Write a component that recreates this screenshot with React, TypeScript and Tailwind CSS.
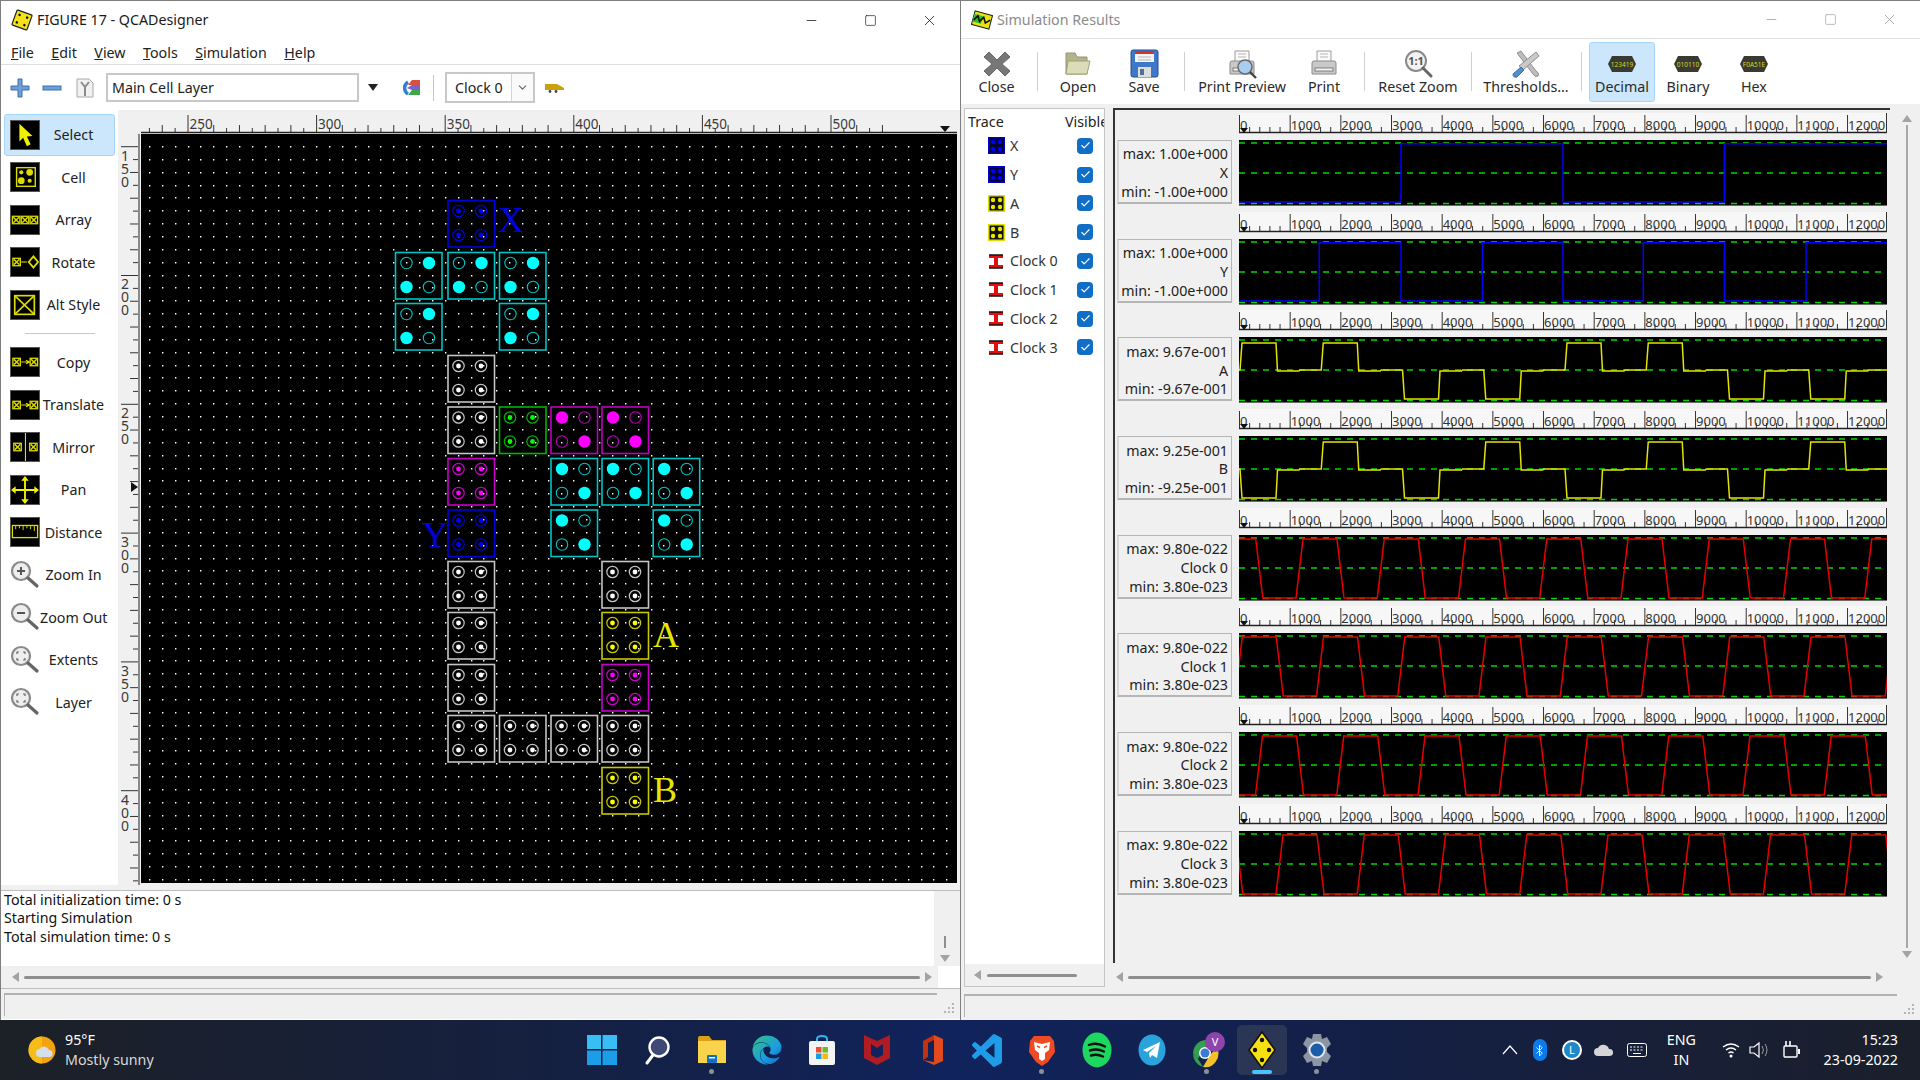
import React from "react";
import { Bluetooth, Check, ChevronDown, Minus, Square, X as XIcon } from "lucide-react";
import { FaEdge } from "react-icons/fa";

// ---------- palette / circuit icons ----------
const Y = "#dcdc00";

const MiniCell = ({ x, y, s = 8 }: { x: number; y: number; s?: number }) => (
  <g>
    <rect x={x} y={y} width={s} height={s} fill="none" stroke={Y} strokeWidth="1.4" />
    <path d={`M${x + 1} ${y + 1}L${x + s - 1} ${y + s - 1}M${x + s - 1} ${y + 1}L${x + 1} ${y + s - 1}`} stroke={Y} strokeWidth="1.6" />
  </g>
);

const BlackIcon = ({ children }: { children: React.ReactNode }) => (
  <svg width="30" height="30" viewBox="0 0 30 30" className="shrink-0 border border-[#555]">
    <rect width="30" height="30" fill="#000" />
    {children}
  </svg>
);

const Lens = ({ children }: { children?: React.ReactNode }) => (
  <svg width="30" height="30" viewBox="0 0 30 30" className="shrink-0">
    <circle cx="11" cy="11" r="9" fill="#eee" stroke="#8a8a8a" strokeWidth="2.2" />
    <path d="M18 18L27 26" stroke="#666" strokeWidth="3.2" strokeLinecap="round" />
    {children}
  </svg>
);

const corners = <path d="M7 9V7H9M13 7H15V9M15 13V15H13M9 15H7V13" fill="none" stroke="#666" strokeWidth="1.2" />;

const paletteTop: [string, React.ReactNode][] = [
  ["Select", <BlackIcon><path d="M9 3V22L13 18L17 27L21 25L17 16.5L23 16Z" fill="#f2f200" /></BlackIcon>],
  ["Cell", <BlackIcon>
    <rect x="6" y="5" width="20" height="20" fill="none" stroke={Y} strokeWidth="1.5" />
    <circle cx="11" cy="10" r="2.2" fill={Y} /><circle cx="20" cy="10" r="3.6" fill={Y} />
    <circle cx="11" cy="19" r="3.6" fill={Y} /><circle cx="20" cy="19" r="2.2" fill={Y} />
  </BlackIcon>],
  ["Array", <BlackIcon><MiniCell x={1.5} y={11} /><MiniCell x={11} y={11} /><MiniCell x={20.5} y={11} /></BlackIcon>],
  ["Rotate", <BlackIcon>
    <MiniCell x={2} y={11} />
    <path d="M11 15H17" stroke={Y} strokeWidth="1.2" />
    <path d="M24 9L29 15L24 21L19 15Z" fill="none" stroke={Y} strokeWidth="2" />
  </BlackIcon>],
  ["Alt Style", <BlackIcon>
    <rect x="4" y="5" width="21" height="20" fill="none" stroke={Y} strokeWidth="1.8" />
    <path d="M4 5L25 25M25 5L4 25" stroke={Y} strokeWidth="1.8" />
  </BlackIcon>],
];

const arrowCells = (
  <BlackIcon>
    <MiniCell x={2} y={11} />
    <path d="M11 15H19M16 13L20 15L16 17" fill="none" stroke={Y} strokeWidth="1.2" />
    <MiniCell x={20.5} y={11} />
  </BlackIcon>
);

const paletteBottom: [string, React.ReactNode][] = [
  ["Copy", arrowCells],
  ["Translate", arrowCells],
  ["Mirror", <BlackIcon><MiniCell x={3} y={11} /><path d="M15.5 0V30" stroke={Y} strokeWidth="1.2" /><MiniCell x={20} y={11} /></BlackIcon>],
  ["Pan", <BlackIcon>
    <path d="M15 3V27M2 15H28" stroke="#f2f200" strokeWidth="2" />
    <path d="M15 0L19 5H11ZM15 30L19 25H11ZM0 15L5 11V19ZM30 15L25 11V19Z" fill="#f2f200" />
  </BlackIcon>],
  ["Distance", <BlackIcon>
    <rect x="1.5" y="8" width="27" height="13" fill="none" stroke={Y} strokeWidth="1.4" />
    <path d="M5 8V12M9 8V11M13 8V13M17 8V11M21 8V12M25 8V14" stroke={Y} strokeWidth="1" />
  </BlackIcon>],
  ["Zoom In", <Lens><path d="M7 11H15M11 7V15" stroke="#555" strokeWidth="2" /></Lens>],
  ["Zoom Out", <Lens><path d="M7 11H15" stroke="#555" strokeWidth="2" /></Lens>],
  ["Extents", <Lens>{corners}</Lens>],
  ["Layer", <Lens>{corners}</Lens>],
];

const PaletteButton = ({ label, icon, active }: { label: string; icon: React.ReactNode; active?: boolean }) => (
  <div className={`mx-[3px] flex h-[42.5px] w-[111px] items-center rounded-[3px] border pl-[5px] ${active ? "border-[#a6d5fb] bg-[#cce6fb]" : "border-transparent"}`}>
    {icon}
    <span className="flex-1 pr-[7px] text-center text-[14.25px] whitespace-nowrap text-[#222]">{label}</span>
  </div>
);

// ---------- QCA canvas ----------
const colX = [395, 447.5, 499, 550.5, 601.5, 652.7];
const rowY = [200, 252, 303, 355, 406.5, 458, 509.5, 561, 612, 664, 715, 767];

type CellKind = "white" | "blue" | "green" | "yellow" | "mag" | "cyanA" | "cyanB" | "magFixed";

const cellColors: Record<CellKind, [string, string]> = {
  white: ["#c4c4c4", "#ffffff"],
  blue: ["#0000d8", "#0000ff"],
  green: ["#00b400", "#00ff00"],
  yellow: ["#c8c800", "#ffff00"],
  magFixed: ["#c800c8", "#ff00ff"],
  mag: ["#c000c0", "#ff00ff"],
  cyanA: ["#00c4c4", "#00ffff"],
  cyanB: ["#00c4c4", "#00ffff"],
};

const cells: [number, number, CellKind][] = [
  [1, 0, "blue"],
  [0, 1, "cyanA"], [1, 1, "cyanA"], [2, 1, "cyanA"],
  [0, 2, "cyanA"], [2, 2, "cyanA"],
  [1, 3, "white"],
  [1, 4, "white"], [2, 4, "green"], [3, 4, "mag"], [4, 4, "mag"],
  [1, 5, "magFixed"], [3, 5, "cyanB"], [4, 5, "cyanB"], [5, 5, "cyanB"],
  [1, 6, "blue"], [3, 6, "cyanB"], [5, 6, "cyanB"],
  [1, 7, "white"], [4, 7, "white"],
  [1, 8, "white"], [4, 8, "yellow"],
  [1, 9, "white"], [4, 9, "magFixed"],
  [1, 10, "white"], [2, 10, "white"], [3, 10, "white"], [4, 10, "white"],
  [4, 11, "yellow"],
];

const QcaCell = ({ x, y, kind }: { x: number; y: number; kind: CellKind }) => {
  const [line, fill] = cellColors[kind];
  const spots = [[11, 11, 0], [33.5, 11, 1], [11, 35, 2], [33.5, 35, 3]] as const;
  // which spots carry charge for the polarised cells
  const charged = (i: number) => (kind === "cyanA" ? i === 1 || i === 2 : i === 0 || i === 3);
  const polar = kind === "cyanA" || kind === "cyanB" || kind === "mag";
  return (
    <g>
      <rect x={x + 0.5} y={y + 0.5} width="46.5" height="46.5" fill="none" stroke={line} strokeWidth="1.6" />
      {spots.map(([dx, dy, i]) =>
        polar ? (
          charged(i) ? (
            <circle key={i} cx={x + dx + 0.5} cy={y + dy} r="6.2" fill={fill} />
          ) : (
            <circle key={i} cx={x + dx + 0.5} cy={y + dy} r="5.7" fill="none" stroke={line} strokeWidth="1.1" />
          )
        ) : (
          <g key={i}>
            <circle cx={x + dx} cy={y + dy} r="5.7" fill="none" stroke={line} strokeWidth="1.2" />
            <circle cx={x + dx} cy={y + dy} r="2.4" fill={fill} />
          </g>
        )
      )}
    </g>
  );
};

const gridDots = (() => {
  let d = "";
  for (let i = 0; i < 64; i++) {
    for (let j = 0; j < 58; j++) {
      d += `M${Math.round(149 + i * 12.86)} ${Math.round(146 + j * 12.86)}h1.4v1.4h-1.4z`;
    }
  }
  return d;
})();

const Canvas = () => (
  <svg width="816" height="749" viewBox="141 134 816 749" className="block bg-black">
    <path d={gridDots} fill="#ffffff" />
    {cells.map(([c, r, k], i) => (
      <QcaCell key={i} x={colX[c]} y={rowY[r]} kind={k} />
    ))}
    <g fontFamily="'Liberation Serif', serif" fontSize="36">
      <text x="498" y="232" fill="#0000e0">X</text>
      <text x="422" y="546.5" fill="#0000e0">Y</text>
      <text x="653" y="647" fill="#e6e600">A</text>
      <text x="653" y="801.5" fill="#e6e600">B</text>
    </g>
  </svg>
);

const TopRuler = () => {
  const ticks = [];
  for (let i = 0; i < 65; i++) {
    const x = 59.4 + i * 12.86;
    if (x < 142 || x > 958) continue;
    if (i % 10 === 0) ticks.push(<path key={i} d={`M${x} 115V133`} stroke="#333" strokeWidth="1" />);
    else ticks.push(<path key={i} d={`M${x} ${i % 2 ? 128 : 125}V133`} stroke="#333" strokeWidth="1" />);
  }
  return (
    <svg width="819" height="24" viewBox="141 110 819 24" className="block">
      {ticks}
      <path d="M141 132.5H957" stroke="#222" strokeWidth="1.4" />
      {[250, 300, 350, 400, 450, 500].map((n, i) => (
        <text key={n} x={189.5 + i * 128.6} y="129" fontSize="13.5" fill="#3a3a3a">{n}</text>
      ))}
      <path d="M940 126H950L945 132Z" fill="#111" />
    </svg>
  );
};

const LeftRuler = () => {
  const ticks = [];
  for (let i = 0; i < 58; i++) {
    const y = 146.7 + i * 12.88;
    const x1 = i % 10 === 0 ? 121 : i % 2 ? 133 : 130;
    ticks.push(<path key={i} d={`M${x1} ${y}H138`} stroke="#333" strokeWidth="1" />);
  }
  return (
    <svg width="23" height="751" viewBox="118 134 23 751" className="block">
      {ticks}
      <path d="M139 134V885" stroke="#444" strokeWidth="1.2" />
      {["150", "200", "250", "300", "350", "400"].map((n, i) => (
        <g key={n} fontSize="14" fill="#3a3a3a">
          {n.split("").map((ch, j) => (
            <text key={j} x="121" y={160.5 + i * 128.8 + j * 13}>{ch}</text>
          ))}
        </g>
      ))}
      <path d="M131 482L138 487L131 492Z" fill="#111" />
    </svg>
  );
};

// ---------- small chrome bits ----------
const Arrow = ({ dir, color = "#a3a3a3" }: { dir: "up" | "down" | "left" | "right"; color?: string }) => {
  const pts = { up: "0,9 5,2 10,9", down: "0,1 10,1 5,8", left: "9,0 9,10 2,5", right: "1,0 1,10 8,5" }[dir];
  return (
    <svg width="10" height="10" viewBox="0 0 10 10" className="shrink-0">
      <polygon points={pts} fill={color} />
    </svg>
  );
};

const HScroll = ({ className }: { className: string }) => (
  <div className={`flex items-center gap-[4px] ${className}`}>
    <Arrow dir="left" />
    <div className="h-[3px] flex-1 rounded-full bg-[#8e8e8e]" />
    <Arrow dir="right" />
  </div>
);

const Grip = () => (
  <svg width="14" height="14" viewBox="0 0 14 14" className="shrink-0">
    <path d="M10 2h2v2h-2zM6 6h2v2H6zM10 6h2v2h-2zM2 10h2v2H2zM6 10h2v2H6zM10 10h2v2h-2z" fill="#b5b5b5" />
  </svg>
);

const StatusBar = ({ className }: { className: string }) => (
  <div className={`flex h-[28px] items-center pb-[2px] ${className}`}>
    <div className="h-[23px] flex-1 border-t-2 border-l border-[#b2b2b2] bg-[#f0f0f0]" />
    <div className="flex w-[23px] justify-center pt-[8px]"><Grip /></div>
  </div>
);

const WindowControls = ({ color }: { color: string }) => (
  <div className="flex items-center pr-[1px]" style={{ color }}>
    <div className="flex w-[59px] justify-center"><Minus size={15} strokeWidth={1.2} /></div>
    <div className="flex w-[59px] justify-center"><Square size={13} strokeWidth={1.2} /></div>
    <div className="flex w-[59px] justify-center"><XIcon size={17} strokeWidth={1.1} /></div>
  </div>
);

// ---------- left window ----------
const menus: [string, string][] = [["F", "ile"], ["E", "dit"], ["V", "iew"], ["T", "ools"], ["S", "imulation"], ["H", "elp"]];

const QcaLogo = ({ size = 22 }: { size?: number }) => (
  <svg width={size} height={size} viewBox="0 0 22 22" className="shrink-0">
    <g transform="rotate(20 11 11)">
      <rect x="3" y="3" width="16" height="16" rx="1" fill="#f3e21a" stroke="#222" strokeWidth="1.2" />
      <circle cx="7" cy="7" r="1.3" fill="#111" /><circle cx="15" cy="7" r="1.3" fill="#111" />
      <circle cx="7" cy="15" r="1.3" fill="#111" /><circle cx="15" cy="15" r="1.3" fill="#111" />
    </g>
  </svg>
);

const DesignerWindow = () => (
  <section className="flex h-full w-[960px] shrink-0 flex-col border-t border-l border-[#7f7f7f] bg-white">
    <header className="flex h-[38px] shrink-0 items-center justify-between pl-[10px]">
      <div className="flex items-center gap-[4px]">
        <QcaLogo />
        <span className="text-[14.25px] text-[#1a1a1a]">FIGURE 17 - QCADesigner</span>
      </div>
      <WindowControls color="#111" />
    </header>

    <nav className="flex h-[26px] shrink-0 items-center gap-[17.5px] border-b border-[#dedede] pt-[2px] pl-[10px] text-[14.25px] text-[#222]">
      {menus.map(([k, rest]) => (
        <span key={k}><u>{k}</u>{rest}</span>
      ))}
    </nav>

    <div className="flex h-[45px] shrink-0 items-center pl-[9px]">
      <svg width="20" height="20" viewBox="0 0 20 20" className="shrink-0">
        <path d="M8 1h4v7h7v4h-7v7H8v-7H1V8h7z" fill="#6d9fd6" stroke="#3a70b0" strokeWidth="1" />
      </svg>
      <svg width="20" height="20" viewBox="0 0 20 20" className="ml-[12px] shrink-0">
        <rect x="1" y="8" width="18" height="4" fill="#6d9fd6" stroke="#3a70b0" strokeWidth="1" />
      </svg>
      <svg width="20" height="22" viewBox="0 0 20 22" className="ml-[13px] shrink-0">
        <path d="M2 2H14L18 6V20H2Z" fill="#f1f1f1" stroke="#a8a8a8" />
        <path d="M6 5L10 10L14 5M10 10V19" fill="none" stroke="#8a8a8a" strokeWidth="2" />
      </svg>
      <div className="ml-[11px] flex h-[29px] w-[253px] shrink-0 items-center border-2 border-[#c8c8c8] pl-[4px] text-[14.25px] text-[#222]">Main Cell Layer</div>
      <div className="ml-[9px] shrink-0"><Arrow dir="down" color="#222" /></div>
      <svg width="22" height="20" viewBox="0 0 22 20" className="ml-[21px] shrink-0">
        <path d="M9 4A7 7 0 0 0 9 16" fill="none" stroke="#2f7fd6" strokeWidth="3.4" />
        <path d="M9 7L13 2H21V7Z" fill="#d8503f" />
        <path d="M8 10L13 7H21V12H13Z" fill="#7a62c8" />
        <path d="M13 12H21V17H9Z" fill="#3ea64a" />
      </svg>
      <div className="ml-[12px] h-[26px] w-px shrink-0 bg-[#c4c4c4]" />
      <div className="ml-[11px] flex h-[31px] w-[90px] shrink-0 items-center justify-between border-2 border-[#c8c8c8] pl-[8px] text-[14.25px] text-[#222]">
        <span>Clock 0</span>
        <div className="flex h-full w-[22px] items-center justify-center border-l border-[#d4d4d4] bg-[#fafafa]">
          <ChevronDown size={13} className="text-[#666]" />
        </div>
      </div>
      <svg width="21" height="12" viewBox="0 0 21 12" className="ml-[9px] shrink-0">
        <path d="M1 2H13L20 6V8H1Z" fill="#c9a20a" />
        <circle cx="6" cy="9.5" r="1.4" fill="#444" /><circle cx="12" cy="9.5" r="1.4" fill="#444" />
      </svg>
    </div>

    <div className="flex h-[775px] shrink-0">
      <aside className="flex w-[117px] shrink-0 flex-col bg-white pt-[3.5px]">
        {paletteTop.map(([label, icon], i) => (
          <PaletteButton key={label} label={label} icon={icon} active={i === 0} />
        ))}
        <div className="my-[7px] ml-[24px] h-px w-[70px] bg-[#c8c8c8]" />
        {paletteBottom.map(([label, icon]) => (
          <PaletteButton key={label} label={label} icon={icon} />
        ))}
      </aside>
      <div className="grid flex-1 grid-cols-[23px_1fr] grid-rows-[24px_1fr] bg-[#f0f0f0]">
        <div />
        <TopRuler />
        <LeftRuler />
        <div className="overflow-hidden"><Canvas /></div>
      </div>
    </div>

    <div className="h-[6px] shrink-0 border-b border-[#bdbdbd] bg-[#f0f0f0]" />
    <div className="flex h-[75px] shrink-0">
      <div className="flex-1 pl-[3px] text-[14.25px] leading-[18.4px] text-[#111]">
        <p>Total initialization time: 0 s</p>
        <p>Starting Simulation</p>
        <p>Total simulation time: 0 s</p>
      </div>
      <div className="flex w-[26px] flex-col items-center justify-end bg-[#f0f0f0] pr-[4px] pb-[2px]">
        <div className="mb-[6px] h-[12px] w-[2px] bg-[#8e8e8e]" />
        <Arrow dir="down" />
      </div>
    </div>
    <div className="flex h-[22px] shrink-0 pr-[22px]">
      <HScroll className="flex-1 bg-[#f0f0f0] pr-[4px] pl-[9px]" />
    </div>
    <div className="h-[3px] shrink-0 border-t border-[#bdbdbd] bg-[#f0f0f0]" />
    <StatusBar className="bg-[#f0f0f0] pl-[3px]" />
  </section>
);

// ---------- wave plots ----------
const PLOT_W = 648;

const square = (edges: number[], top: number, bottom: number) => {
  let level = bottom;
  let pts = `0,${level}`;
  edges.forEach((x) => {
    const next = level === bottom ? top : bottom;
    pts += ` ${x},${level} ${x},${next}`;
    level = next;
  });
  return `${pts} ${PLOT_W},${level}`;
};

// first 40% of a clock phase at the level, the rest at the middle
const stepped = (levels: number[]) => {
  const mid = 33;
  let pts = "0,33";
  levels.forEach((lv, k) => {
    const x = k * 81.25;
    const y = lv > 0 ? 6 : 62;
    pts += ` ${x + 1},${mid} ${x + 3},${y} ${x + 37},${y} ${x + 38.5},${mid + 1} ${x + 60},${mid + 1} ${x + 61},${mid} ${x + 81},${mid}`;
  });
  return pts;
};

const clock = (riseStart: number) => {
  let pts = "";
  for (let k = -2; k < 10; k++) {
    const t = riseStart + k * 81.25;
    pts += ` ${t},63 ${t + 7},4 ${t + 41},4 ${t + 48},63`;
  }
  return pts.trim();
};

const traces = [
  { name: "X", max: "1.00e+000", min: "-1.00e+000", color: "#0000ff", pts: square([162, 324, 485.3], 3.7, 62) },
  { name: "Y", max: "1.00e+000", min: "-1.00e+000", color: "#0000ff", pts: square([80.3, 162, 243.3, 324, 404.3, 485.3, 567], 3.7, 62) },
  { name: "A", max: "9.67e-001", min: "-9.67e-001", color: "#e4e400", pts: stepped([1, 1, -1, -1, 1, 1, -1, -1]) },
  { name: "B", max: "9.25e-001", min: "-9.25e-001", color: "#e4e400", pts: stepped([-1, 1, -1, 1, -1, 1, -1, 1]) },
  { name: "Clock 0", max: "9.80e-022", min: "3.80e-023", color: "#e80000", pts: clock(57) },
  { name: "Clock 1", max: "9.80e-022", min: "3.80e-023", color: "#e80000", pts: clock(77.5) },
  { name: "Clock 2", max: "9.80e-022", min: "3.80e-023", color: "#e80000", pts: clock(16.5) },
  { name: "Clock 3", max: "9.80e-022", min: "3.80e-023", color: "#e80000", pts: clock(37) },
];

const WaveRuler = () => {
  const ticks = [];
  for (let i = 0; i <= 63; i++) {
    const x = i * 10.134;
    ticks.push(<path key={i} d={`M${x + 0.5} ${i % 5 === 0 ? 2 : 14}V20`} stroke="#333" strokeWidth="1" />);
  }
  return (
    <svg width={PLOT_W} height="21" viewBox={`0 0 ${PLOT_W} 21`} className="block bg-[#f7f7f7]">
      {ticks}
      <path d={`M0 19.5H${PLOT_W}`} stroke="#222" strokeWidth="1.4" />
      <path d={`M${PLOT_W - 0.5} 0V20`} stroke="#333" strokeWidth="1" />
      {Array.from({ length: 13 }, (_, i) => (
        <text key={i} x={i * 50.67 + 1} y="17" fontSize="13" fill="#333">{i * 1000}</text>
      ))}
      <path d="M1 15H9L5 20Z" fill="#111" />
    </svg>
  );
};

const Plot = ({ color, pts }: { color: string; pts: string }) => (
  <svg width={PLOT_W} height="66" viewBox={`0 0 ${PLOT_W} 66`} className="block bg-black">
    <path d={`M0 3H${PLOT_W}M0 33H${PLOT_W}M0 63.5H${PLOT_W}`} stroke="#00d800" strokeWidth="1.4" strokeDasharray="6 6" />
    <polyline points={pts} fill="none" stroke={color} strokeWidth="1.5" />
    <path d={`M0 65.5H${PLOT_W}`} stroke="#6a6a6a" />
  </svg>
);

const TraceRow = ({ t }: { t: (typeof traces)[number] }) => (
  <div className="flex h-[98.7px] shrink-0 pl-[2px]">
    <div className="w-[115px] shrink-0 pt-[27px]">
      <div className="flex h-[64px] flex-col justify-center border-t border-r border-b-2 border-l-2 border-t-[#b5b5b5] border-r-[#b5b5b5] border-b-[#b5b5b5] border-l-[#d8d8d8] bg-[#f0f0f0] pt-[4px] pr-[3px] text-right text-[14.25px] leading-[18.7px] text-[#222]">
        <p>max: {t.max}</p>
        <p>{t.name}</p>
        <p>min: {t.min}</p>
      </div>
    </div>
    <div className="ml-[7px]">
      <WaveRuler />
      <div className="mt-[6px]"><Plot color={t.color} pts={t.pts} /></div>
    </div>
  </div>
);

// ---------- right window ----------
const TraceCellIcon = ({ bg, dot }: { bg: string; dot: string }) => (
  <svg width="17" height="17" viewBox="0 0 17 17" className="shrink-0">
    <rect x="0.5" y="0.5" width="16" height="16" fill="#000" stroke={bg} />
    <rect x="1" y="1" width="15" height="15" fill={bg === "#0000c8" ? "#00002a" : "#111"} stroke={bg} />
    {[[5, 5], [12, 5], [5, 12], [12, 12]].map(([x, y]) => (
      <circle key={`${x}${y}`} cx={x} cy={y} r="2.2" fill={dot} />
    ))}
  </svg>
);

const ClockIcon = () => (
  <svg width="17" height="17" viewBox="0 0 17 17" className="shrink-0">
    <path d="M1 2H15V5H10L10 12H15V15H1V12H6L6 5H1Z" fill="#e01010" />
    <path d="M1 2H15M1 15H15" stroke="#111" strokeWidth="1.6" />
  </svg>
);

const traceList = [
  { n: "X", icon: <TraceCellIcon bg="#0000c8" dot="#0000ff" /> },
  { n: "Y", icon: <TraceCellIcon bg="#0000c8" dot="#0000ff" /> },
  { n: "A", icon: <TraceCellIcon bg="#e0e000" dot="#e8e800" /> },
  { n: "B", icon: <TraceCellIcon bg="#e0e000" dot="#e8e800" /> },
  { n: "Clock 0", icon: <ClockIcon /> },
  { n: "Clock 1", icon: <ClockIcon /> },
  { n: "Clock 2", icon: <ClockIcon /> },
  { n: "Clock 3", icon: <ClockIcon /> },
];

const Tool = ({ label, icon, width, active }: { label: string; icon: React.ReactNode; width: string; active?: boolean }) => (
  <div className={`flex h-[60px] shrink-0 flex-col items-center rounded-[3px] border pt-[7px] ${width} ${active ? "border-[#a6d5fb] bg-[#cce6fb]" : "border-transparent"}`}>
    <div className="flex h-[28px] items-center justify-center">{icon}</div>
    <span className="text-[14.25px] leading-[18px] whitespace-nowrap text-[#2a2a2a]">{label}</span>
  </div>
);

const ToolIcon = ({ children }: { children: React.ReactNode }) => (
  <svg width="30" height="30" viewBox="0 0 30 30">{children}</svg>
);

const printerBody = (
  <g>
    <path d="M8 2H22V13H8Z" fill="#fafafa" stroke="#9a9a9a" />
    <path d="M11 5H19M11 8H19" stroke="#b5b5b5" />
    <path d="M3 14Q3 12 5 12H25Q27 12 27 14V25H3Z" fill="#c9c9c9" stroke="#8a8a8a" />
    <rect x="6" y="19" width="18" height="3" fill="#f6f6f6" stroke="#7d7d7d" />
  </g>
);

const Chip = ({ text }: { text: string }) => (
  <svg width="30" height="20" viewBox="0 0 30 20">
    <path d="M5 2H25L29 10L25 18H5L1 10Z" fill="#3a3a34" />
    <text x="15" y="12.5" fontSize="6.5" textAnchor="middle" fill="#d8d820">{text}</text>
  </svg>
);

const Sep = ({ className }: { className: string }) => <div className={`h-[39px] w-px shrink-0 bg-[#cfcfcf] ${className}`} />;

const ResultsWindow = () => (
  <section className="flex h-full flex-1 flex-col border-t border-l border-[#7f7f7f] bg-white">
    <header className="flex h-[38px] shrink-0 items-center justify-between border-b border-[#e2e2e2] pl-[10px]">
      <div className="flex items-center gap-[4px]">
        <svg width="22" height="22" viewBox="0 0 22 22" className="shrink-0">
          <g transform="rotate(15 11 11)">
            <rect x="2" y="4" width="18" height="14" fill="#e8e410" stroke="#1a1a1a" />
            <rect x="2" y="7" width="9" height="8" fill="#2ec02e" />
            <path d="M3 13L6 8L9 13L12 8L15 13L19 9" fill="none" stroke="#111" strokeWidth="1.6" />
          </g>
        </svg>
        <span className="text-[14.25px] text-[#8b8b8b]">Simulation Results</span>
      </div>
      <WindowControls color="#9a9a9a" />
    </header>

    <div className="flex h-[65px] shrink-0 items-center pl-[3px]">
      <Tool width="w-[65px]" label="Close" icon={
        <ToolIcon><path d="M7 3L15 11L23 3L28 8L20 15L28 22L23 27L15 19L7 27L2 22L10 15L2 8Z" fill="#777" stroke="#666" strokeLinejoin="round" /></ToolIcon>
      } />
      <Sep className="ml-[8px] mr-[7px]" />
      <Tool width="w-[66px]" label="Open" icon={
        <ToolIcon>
          <path d="M3 4H12L14 8H24V25H3Z" fill="#b4b48c" stroke="#94946e" />
          <path d="M3 25L5 12H27L24 25Z" fill="#dcdcb8" stroke="#a0a07a" />
        </ToolIcon>
      } />
      <Tool width="w-[66px]" label="Save" icon={
        <ToolIcon>
          <rect x="2" y="1" width="27" height="27" rx="2" fill="#3f78c8" stroke="#23508f" />
          <rect x="6" y="2" width="19" height="11" fill="#f4f4f4" />
          <rect x="6" y="2" width="19" height="3" fill="#d8322a" />
          <path d="M9 8H22M9 11H22" stroke="#b9b9b9" />
          <rect x="9" y="18" width="13" height="10" fill="#dedede" />
          <rect x="11" y="20" width="4" height="6" fill="#54708f" />
        </ToolIcon>
      } />
      <Sep className="ml-[7px] mr-[5px]" />
      <Tool width="w-[104px]" label="Print Preview" icon={
        <ToolIcon>
          {printerBody}
          <circle cx="18" cy="18" r="7" fill="#a9cdf0" stroke="#6a6a6a" strokeWidth="1.5" />
          <path d="M23 23L29 29" stroke="#444" strokeWidth="2.4" />
        </ToolIcon>
      } />
      <Tool width="w-[60px]" label="Print" icon={<ToolIcon>{printerBody}</ToolIcon>} />
      <Sep className="ml-[10px] mr-[9px]" />
      <Tool width="w-[88px]" label="Reset Zoom" icon={
        <ToolIcon>
          <circle cx="13" cy="12" r="10" fill="#f2f2f2" stroke="#8a8a8a" strokeWidth="2" />
          <text x="13" y="16" fontSize="11" fontWeight="700" textAnchor="middle" fill="#555">1:1</text>
          <path d="M20 19L28 27" stroke="#666" strokeWidth="3" strokeLinecap="round" />
        </ToolIcon>
      } />
      <Sep className="ml-[9px] mr-[8px]" />
      <Tool width="w-[92px]" label="Thresholds..." icon={
        <ToolIcon>
          <path d="M6 4L10 2L25 22Q29 24 27 27Q24 29 22 25Z" fill="#bdbdbd" stroke="#8f8f8f" />
          <path d="M25 3L28 7L12 21L8 17Z" fill="#c9c9c9" stroke="#8f8f8f" />
          <path d="M10 18L13 21L6 28Q2 29 2 25Z" fill="#4f8fd0" stroke="#3a70a8" />
        </ToolIcon>
      } />
      <Sep className="ml-[9px] mr-[7px]" />
      <Tool active width="w-[66px]" label="Decimal" icon={<Chip text="123419" />} />
      <Tool width="w-[66px]" label="Binary" icon={<Chip text="010110" />} />
      <Tool width="w-[66px]" label="Hex" icon={<Chip text="F0A51E" />} />
    </div>

    <div className="flex min-h-0 flex-1 bg-[#f0f0f0] pt-[4px] pl-[3px]">
      <div className="flex h-[879px] w-[141px] shrink-0 flex-col border border-[#c4c4c4] bg-white">
        <div className="flex h-[22.5px] shrink-0 items-center pt-[3px] text-[14.25px] text-[#222]">
          <span className="w-[100px] shrink-0 pl-[3px]">Trace</span>
          <span className="overflow-hidden whitespace-nowrap">Visible</span>
        </div>
        <div className="flex-1">
          {traceList.map(({ n, icon }) => (
            <div key={n} className="flex h-[28.8px] items-center pl-[23px] text-[14.25px] text-[#333]">
              {icon}
              <span className="ml-[5px] flex-1">{n}</span>
              <div className="mr-[11px] flex h-[16px] w-[16px] items-center justify-center rounded-[4px] bg-[#0f6fc6]">
                <Check size={11} strokeWidth={2.5} className="text-white" />
              </div>
            </div>
          ))}
        </div>
        <div className="flex h-[22px] shrink-0 items-center gap-[5px] bg-[#f0f0f0] pl-[7px]">
          <Arrow dir="left" />
          <div className="h-[3px] w-[90px] rounded-full bg-[#8e8e8e]" />
        </div>
      </div>

      <div className="ml-[8px] flex flex-1 flex-col">
        <div className="flex h-[855px] shrink-0">
          <div className="flex w-[777px] shrink-0 flex-col border-t-2 border-l-2 border-[#333] pt-[3px]">
            {traces.map((t) => (
              <TraceRow key={t.name} t={t} />
            ))}
          </div>
          <div className="flex flex-1 flex-col items-center pt-[5px] pb-[3px] pl-[4px]">
            <Arrow dir="up" />
            <div className="my-[2px] w-[2px] flex-1 bg-[#a8a8a8]" />
            <Arrow dir="down" />
          </div>
        </div>
        <HScroll className="mt-[3px] h-[22px] w-[772px] pl-[1px]" />
      </div>
    </div>
    <StatusBar className="bg-[#f0f0f0] pl-[3px]" />
  </section>
);

// ---------- taskbar ----------
const TaskIcon = ({ children, dot, active }: { children: React.ReactNode; dot?: boolean; active?: boolean }) => (
  <div className={`relative mx-[2.5px] flex h-[50px] w-[50px] items-center justify-center rounded-[5px] ${active ? "bg-[#2a3654]" : ""}`}>
    {children}
    {dot && <div className="absolute bottom-[1px] h-[5px] w-[5px] rounded-full bg-[#8a8f9a]" />}
    {active && <div className="absolute bottom-[1px] h-[4px] w-[20px] rounded-full bg-[#4cc2ff]" />}
  </div>
);

const Taskbar = () => (
  <footer className="flex h-[60px] shrink-0 items-center bg-[linear-gradient(90deg,#1d2027_0%,#152040_28%,#10235c_50%,#141f45_72%,#1b1f2b_100%)] text-white">
    <div className="flex w-[574px] shrink-0 items-center pl-[28px]">
      <svg width="28" height="30" viewBox="0 0 28 30" className="shrink-0">
        <circle cx="14" cy="15" r="13.5" fill="#f2a30f" />
        <path d="M14 1.5A13.5 13.5 0 0 0 14 28.5Z" fill="#f6bc18" />
        <path d="M12 22a4 4 0 0 1 0-8 5 5 0 0 1 9 1 3.5 3.5 0 0 1 0 7Z" fill="#d5dfec" />
      </svg>
      <div className="ml-[9px] text-[14.25px] leading-[20px]">
        <p>95°F</p>
        <p className="text-[#d8d8d8]">Mostly sunny</p>
      </div>
    </div>

    <div className="flex shrink-0 items-center">
      <TaskIcon>
        <svg width="30" height="30" viewBox="0 0 30 30">
          <path d="M0 0H14V14H0ZM15.5 0H30V14H15.5Z" fill="#39bdf5" />
          <path d="M0 15.5H14V30H0ZM15.5 15.5H30V30H15.5Z" fill="#1b9de8" />
        </svg>
      </TaskIcon>
      <TaskIcon>
        <svg width="30" height="30" viewBox="0 0 30 30">
          <circle cx="17" cy="12" r="9.5" fill="#3c4a75" stroke="#fff" strokeWidth="2.4" />
          <path d="M11 20L5 28" stroke="#fff" strokeWidth="3" strokeLinecap="round" />
        </svg>
      </TaskIcon>
      <TaskIcon dot>
        <svg width="30" height="30" viewBox="0 0 30 30">
          <path d="M1 3Q1 1 3 1H12L15 5H29V28H1Z" fill="#d9a113" />
          <rect x="1" y="6" width="28" height="22" fill="#fad34c" />
          <rect x="10" y="20" width="10" height="8" rx="1" fill="#1170c4" />
          <rect x="12" y="22" width="6" height="1.5" fill="#fff" />
        </svg>
      </TaskIcon>
      <TaskIcon>
        <svg width="0" height="0" className="block">
          <defs>
            <linearGradient id="edgeFill" x1="0" y1="0" x2="1" y2="1">
              <stop offset="0%" stopColor="#35c27f" />
              <stop offset="60%" stopColor="#1b9de2" />
              <stop offset="100%" stopColor="#1565b8" />
            </linearGradient>
          </defs>
        </svg>
        <FaEdge size={30} fill="url(#edgeFill)" />
      </TaskIcon>
      <TaskIcon>
        <svg width="30" height="32" viewBox="0 0 30 32">
          <path d="M10 8V5Q10 2 15 2Q20 2 20 5V8" fill="none" stroke="#2fb5e8" strokeWidth="2" />
          <rect x="2" y="7" width="26" height="24" rx="2" fill="#f3f3f3" />
          <rect x="9" y="13" width="5.5" height="5.5" fill="#e8502f" />
          <rect x="15.5" y="13" width="5.5" height="5.5" fill="#6cbb2a" />
          <rect x="9" y="19.5" width="5.5" height="5.5" fill="#1d9be0" />
          <rect x="15.5" y="19.5" width="5.5" height="5.5" fill="#f6b70f" />
        </svg>
      </TaskIcon>
      <TaskIcon>
        <svg width="28" height="32" viewBox="0 0 28 32">
          <path d="M1 1L14 7L27 1V24L14 31L1 24Z" fill="#b01c22" />
          <path d="M8 10L14 14L20 10V21L14 24L8 21Z" fill="#10235c" />
        </svg>
      </TaskIcon>
      <TaskIcon>
        <svg width="26" height="32" viewBox="0 0 26 32">
          <path d="M15 1L24 5V27L15 31L4 26L15 28Z" fill="#e2491f" />
          <path d="M4 26V7L15 1V6L9 9V23Z" fill="#c1330f" />
        </svg>
      </TaskIcon>
      <TaskIcon>
        <svg width="30" height="33" viewBox="0 0 24 24" preserveAspectRatio="none">
          <path d="M23.15 2.587L18.21.21a1.494 1.494 0 0 0-1.705.29l-9.46 8.63-4.12-3.128a.999.999 0 0 0-1.276.057L.327 7.261A1 1 0 0 0 .326 8.74L3.899 12 .326 15.26a1 1 0 0 0 .001 1.479L1.65 17.94a.999.999 0 0 0 1.276.057l4.12-3.128 9.46 8.63a1.492 1.492 0 0 0 1.704.29l4.942-2.377A1.5 1.5 0 0 0 24 20.06V3.939a1.5 1.5 0 0 0-.85-1.352zm-5.146 14.861L10.826 12l7.178-5.448v10.896z" fill="#1f9ce8" />
        </svg>
      </TaskIcon>
      <TaskIcon dot>
        <svg width="28" height="33" viewBox="0 0 28 33">
          <path d="M6 2H22L26 7L27 18L20 28L14 32L8 28L1 18L2 7Z" fill="#ef4a23" />
          <path d="M6 8L14 10L22 8L21 16L17 19V25L14 27L11 25V19L7 16Z" fill="#fff" />
          <path d="M9 12L12 13.5M19 12L16 13.5" stroke="#ef4a23" strokeWidth="1.5" />
        </svg>
      </TaskIcon>
      <TaskIcon>
        <svg width="30" height="36" viewBox="0 0 30 36">
          <ellipse cx="15" cy="18" rx="14.5" ry="17.5" fill="#1ed760" />
          <path d="M7 13Q15 10 23 14.5M8 18.5Q15 16 22 19.5M9 23.5Q15 21.5 21 24.5" fill="none" stroke="#111" strokeWidth="2.4" strokeLinecap="round" />
        </svg>
      </TaskIcon>
      <TaskIcon>
        <svg width="28" height="32" viewBox="0 0 28 32">
          <ellipse cx="14" cy="16" rx="13.5" ry="15.5" fill="#2aa3dc" />
          <path d="M5 16L22 8L19 24L14 21L12 24L11 19L18 12L9 18Z" fill="#fff" />
        </svg>
      </TaskIcon>
      <TaskIcon dot>
        <svg width="36" height="36" viewBox="0 0 36 36">
          <path d="M16 8A13 14 0 0 1 28 15H16Z" fill="#e2412f" />
          <path d="M4 21A13 14 0 0 1 16 8L16 15L9 27Z" fill="#34a050" />
          <path d="M28 15A13 14 0 0 1 14 35L21 23Z" fill="#f2c02c" />
          <path d="M4 21L9 27L14 35A13 14 0 0 1 4 21Z" fill="#34a050" />
          <circle cx="16" cy="21" r="6" fill="#fff" /><circle cx="16" cy="21" r="4.5" fill="#3b78d8" />
          <circle cx="26" cy="10" r="10" fill="#8e44ad" />
          <text x="26" y="14" fontSize="11" textAnchor="middle" fill="#fff">V</text>
        </svg>
      </TaskIcon>
      <TaskIcon active>
        <svg width="28" height="38" viewBox="0 0 28 38">
          <path d="M14 1L27 19L14 37L1 19Z" fill="#f6e010" stroke="#111" strokeWidth="1.5" />
          <circle cx="14" cy="9" r="2.2" fill="#111" /><circle cx="21" cy="19" r="2.2" fill="#111" />
          <circle cx="7" cy="19" r="2.2" fill="#111" /><circle cx="14" cy="29" r="2.2" fill="#111" />
        </svg>
      </TaskIcon>
      <TaskIcon dot>
        <svg width="30" height="34" viewBox="0 0 30 34">
          <path d="M11 1H19L20 6L25 4L29 11L25 15V19L29 23L25 30L20 28L19 33H11L10 28L5 30L1 23L5 19V15L1 11L5 4L10 6Z" fill="#8b95a3" />
          <circle cx="15" cy="17" r="7.5" fill="#1d5da8" stroke="#dfe5ec" strokeWidth="2" />
        </svg>
      </TaskIcon>
    </div>

    <div className="flex flex-1 items-center justify-end pr-[22px]">
      <svg width="16" height="10" viewBox="0 0 16 10" className="shrink-0">
        <path d="M1 9L8 1L15 9" fill="none" stroke="#fff" strokeWidth="1.2" />
      </svg>
      <div className="ml-[15px] flex h-[22px] w-[14px] items-center justify-center rounded-full bg-[#0a7be8]">
        <Bluetooth size={13} strokeWidth={1.6} className="text-white" />
      </div>
      <div className="ml-[15px] flex h-[20px] w-[20px] items-center justify-center rounded-full border-2 border-white bg-[#1e88c8] text-[11px]">L</div>
      <svg width="22" height="14" viewBox="0 0 22 14" className="ml-[11px] shrink-0">
        <path d="M5 13a4 4 0 0 1 0-8 6 6 0 0 1 11 1 3.5 3.5 0 0 1 1 7Z" fill="#d5d5d5" />
      </svg>
      <svg width="20" height="14" viewBox="0 0 20 14" className="ml-[12px] shrink-0">
        <rect x="0.5" y="0.5" width="19" height="13" rx="2" fill="none" stroke="#fff" />
        <path d="M3 4h2M6.5 4h2M10 4h2M13.5 4h2M3 7h2M6.5 7h2M10 7h2M13.5 7h2M6 10.5h8" stroke="#fff" strokeWidth="1" />
      </svg>
      <div className="ml-[20px] text-center text-[14.25px] leading-[20px]">
        <p>ENG</p>
        <p>IN</p>
      </div>
      <svg width="18" height="16" viewBox="0 0 18 16" className="ml-[26px] shrink-0">
        <path d="M1 5Q9 -1 17 5M4 8Q9 4 14 8M6.5 11Q9 9 11.5 11" fill="none" stroke="#fff" strokeWidth="1.4" />
        <circle cx="9" cy="14" r="1.5" fill="#fff" />
      </svg>
      <svg width="20" height="18" viewBox="0 0 20 18" className="ml-[9px] shrink-0">
        <path d="M1 6H5L10 2V16L5 12H1Z" fill="none" stroke="#fff" strokeWidth="1.2" />
        <path d="M13 5Q16 9 13 13M16 3Q20 9 16 15" fill="none" stroke="#999" strokeWidth="1" />
      </svg>
      <svg width="20" height="20" viewBox="0 0 20 20" className="ml-[12px] shrink-0">
        <rect x="3" y="6" width="13" height="11" rx="1" fill="none" stroke="#fff" strokeWidth="1.4" />
        <rect x="17" y="9" width="2" height="5" fill="#fff" />
        <path d="M5 1V6M9 1V6" stroke="#fff" strokeWidth="1.6" />
      </svg>
      <div className="ml-[15px] w-[82px] text-right text-[14.25px] leading-[20px]">
        <p>15:23</p>
        <p>23-09-2022</p>
      </div>
    </div>
  </footer>
);

export default function App() {
  return (
    <div className="flex h-[1080px] w-[1920px] flex-col overflow-hidden bg-white font-['Noto_Sans',sans-serif]">
      <div className="flex h-[1020px] shrink-0">
        <DesignerWindow />
        <ResultsWindow />
      </div>
      <Taskbar />
    </div>
  );
}
